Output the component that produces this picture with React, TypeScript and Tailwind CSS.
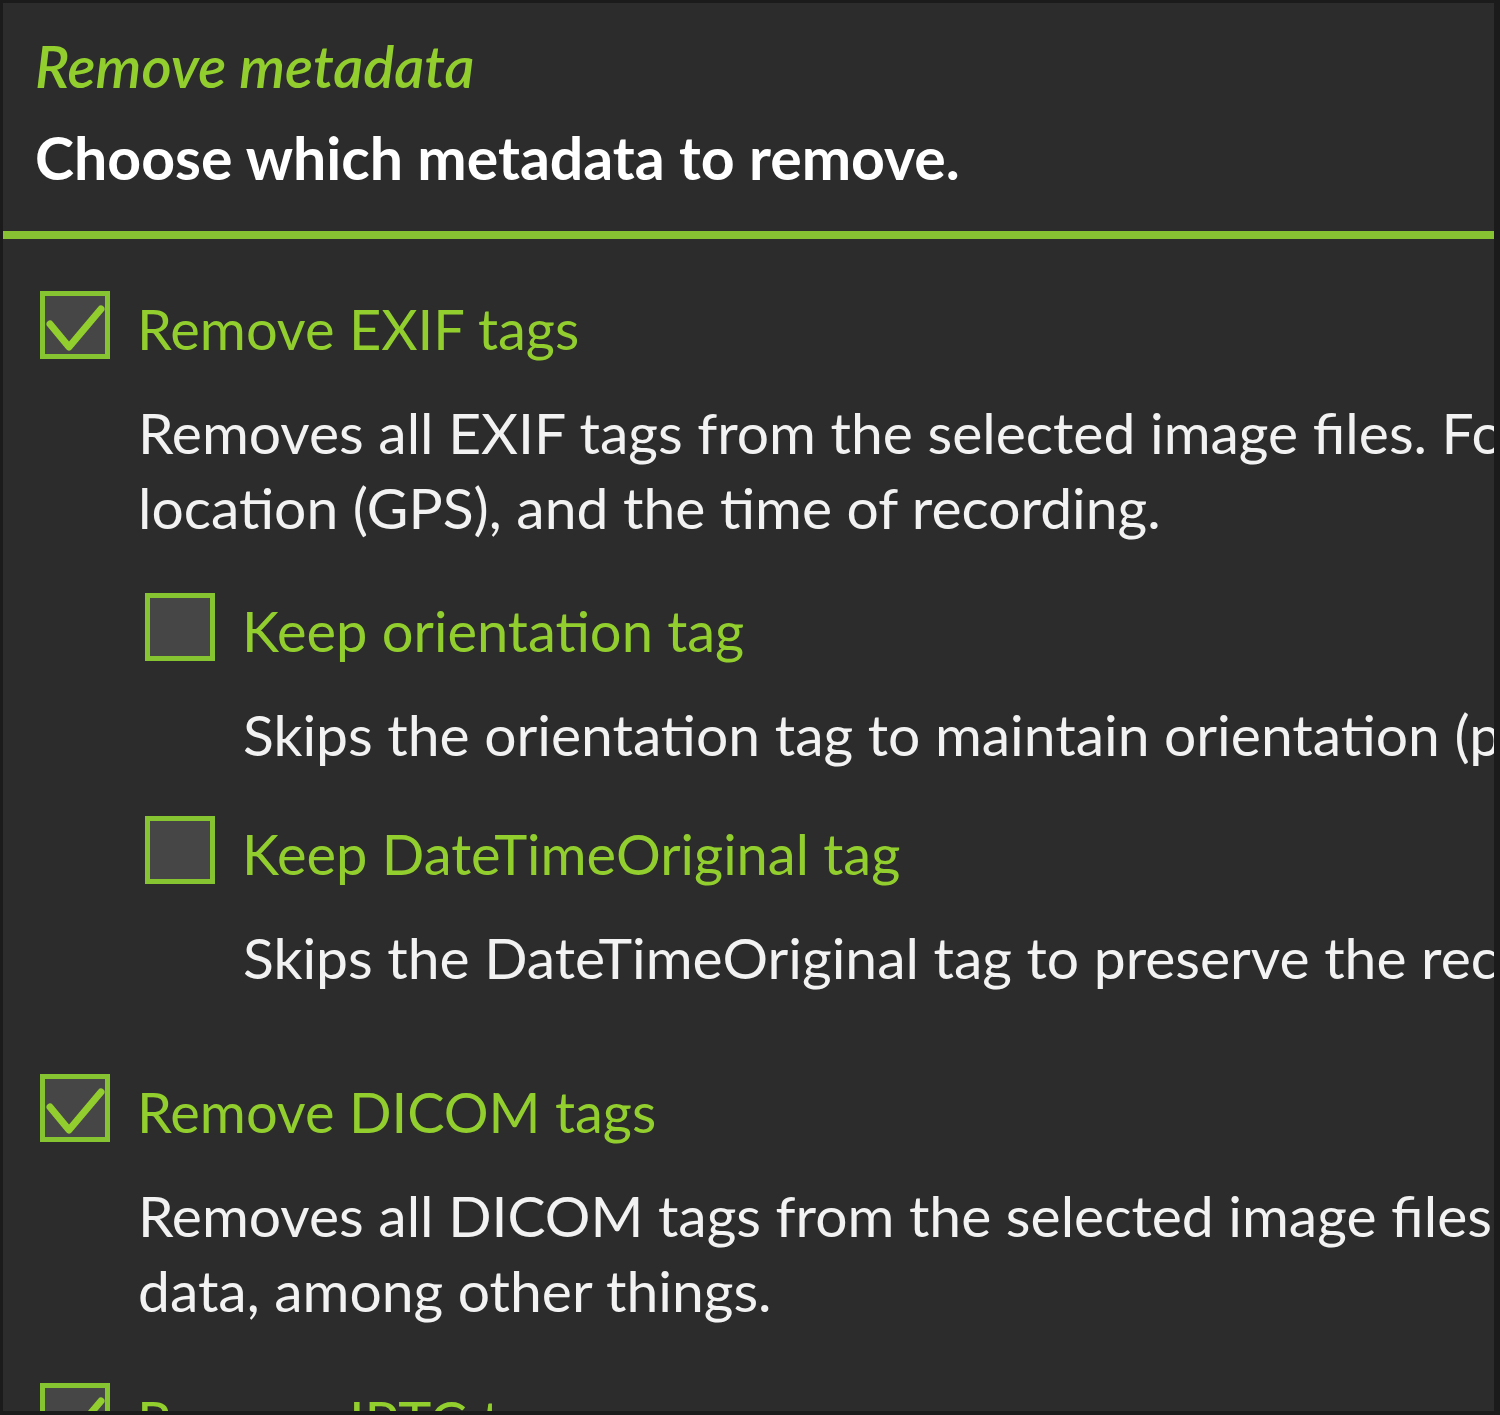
const font = { fontFamily: "Lato, 'Liberation Sans', sans-serif" };

type Opt = {
  label: string;
  checked: boolean;
  lines: string[];
};

function Checkbox({ checked }: { checked: boolean }) {
  return (
    <div className="flex h-[68px] w-[70px] shrink-0 items-center justify-center border-[5px] border-[#86c432] bg-[#464646]">
      {checked ? (
        <svg viewBox="0 0 60 58" className="h-[58px] w-[60px]">
          <path
            d="M5 28 L24 51 L56 13"
            fill="none"
            stroke="#92cf2e"
            strokeWidth="7"
            strokeLinecap="round"
            strokeLinejoin="round"
          />
        </svg>
      ) : null}
    </div>
  );
}

function Option({ opt }: { opt: Opt }) {
  return (
    <div>
      <div className="flex items-start gap-[27px]">
        <Checkbox checked={opt.checked} />
        <span className="whitespace-nowrap text-[56px] leading-[75px] text-[#92cf2e]">{opt.label}</span>
      </div>
      <div className="mt-[29px] pl-[98px] text-[57px] leading-[75px] text-[#f2f2f2]">
        {opt.lines.map((l) => (
          <div key={l} className="whitespace-nowrap">
            {l}
          </div>
        ))}
      </div>
    </div>
  );
}

const exif: Opt = {
  label: "Remove EXIF tags",
  checked: true,
  lines: [
    "Removes all EXIF tags from the selected image files. For example, the camera model,",
    "location (GPS), and the time of recording.",
  ],
};

const nested: Opt[] = [
  {
    label: "Keep orientation tag",
    checked: false,
    lines: ["Skips the orientation tag to maintain orientation (prevents unwanted rotation)."],
  },
  {
    label: "Keep DateTimeOriginal tag",
    checked: false,
    lines: ["Skips the DateTimeOriginal tag to preserve the recording date and time."],
  },
];

const dicom: Opt = {
  label: "Remove DICOM tags",
  checked: true,
  lines: [
    "Removes all DICOM tags from the selected image files. This includes patient",
    "data, among other things.",
  ],
};

const iptc: Opt = {
  label: "Remove IPTC tags",
  checked: true,
  lines: ["Removes all IPTC tags from the selected image files."],
};

export default function App() {
  return (
    <div className="h-[1415px] w-[1500px] overflow-hidden bg-[#1b1b1b] pb-[4px] pl-[3px] pr-[6px] pt-[3px]" style={font}>
      <div className="h-full overflow-hidden bg-[#2c2c2c]">
        <header className="px-[32px] pt-[25px]">
          <h1 className="whitespace-nowrap text-[58px] font-semibold italic leading-[75px] text-[#92cf2e]">
            Remove metadata
          </h1>
          <p className="mt-[17px] whitespace-nowrap text-[59px] font-bold leading-[75px] text-white">
            Choose which metadata to remove.
          </p>
        </header>
        <div className="mt-[36px] h-[8px] bg-[#86c232]" />

        <div className="pl-[37px] pt-[52px]">
          <Option opt={exif} />
          <div className="pl-[105px]">
            <div className="mt-[48px]">
              <Option opt={nested[0]} />
            </div>
            <div className="mt-[44px]">
              <Option opt={nested[1]} />
            </div>
          </div>
          <div className="mt-[79px]">
            <Option opt={dicom} />
          </div>
          <div className="mt-[55px]">
            <Option opt={iptc} />
          </div>
        </div>
      </div>
    </div>
  );
}
